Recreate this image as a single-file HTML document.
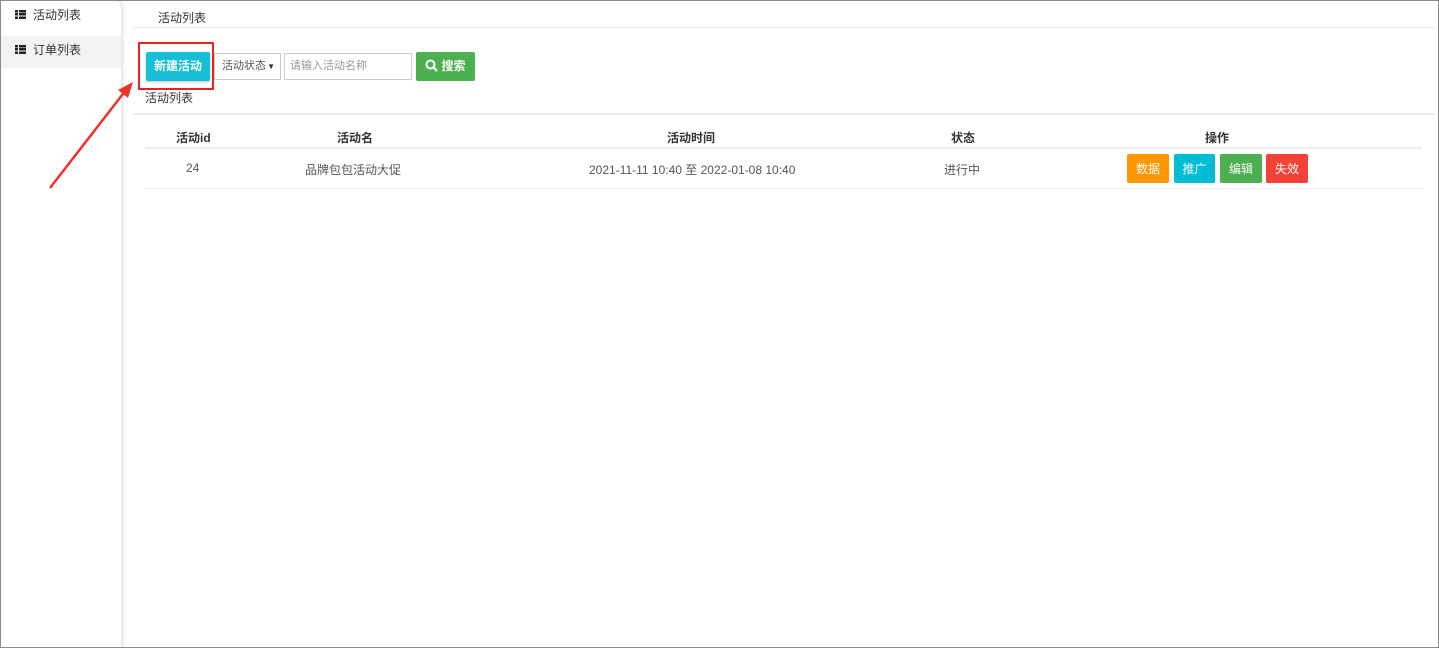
<!DOCTYPE html>
<html><head><meta charset="utf-8"><style>
*{box-sizing:border-box;margin:0;padding:0}
body{width:1439px;height:648px;background:#fff;font-family:"Liberation Sans","Noto Sans CJK SC",sans-serif;font-size:12px;color:#333;position:relative;overflow:hidden}
.frame{position:absolute;left:0;top:0;width:1439px;height:648px;border:1px solid #8a8a8a;pointer-events:none;z-index:5}
.side{position:absolute;left:0;top:0;width:121px;height:648px;background:#fff;box-shadow:2px 0 4px rgba(0,0,0,.12);border-top-right-radius:8px}
.mi{height:32px;line-height:30px;padding-left:15px;font-size:12px;color:#333}
.mi.on{background:#f3f3f3;margin-top:4px;line-height:28px}
.ic{display:inline-block;width:11px;height:9px;margin-right:7px;vertical-align:0px;background:linear-gradient(90deg,#222 0 3px,transparent 3px 4px,#222 4px),linear-gradient(#fff 0,#fff);background-blend-mode:normal;-webkit-mask:linear-gradient(#000 0 2.5px,transparent 2.5px 3.25px,#000 3.25px 5.75px,transparent 5.75px 6.5px,#000 6.5px 9px)}
.t{position:absolute}
.btn{position:absolute;color:#fff;font-size:12px;text-align:center;border-radius:2px}
</style></head><body>
<div class="frame"></div>
<div class="side">
<div class="mi"><span class="ic"></span>活动列表</div>
<div class="mi on"><span class="ic"></span>订单列表</div>
</div>
<div class="t" style="left:158px;top:9px;font-size:12px">活动列表</div>
<div class="t" style="left:133px;top:27px;width:1302px;border-top:1px solid #e6e6e6"></div>
<div class="btn" style="left:146px;top:52px;width:64px;height:29px;line-height:29px;background:#17bfd6;box-shadow:0 1px 2px rgba(0,0,0,.25);font-weight:bold">新建活动</div>
<div class="t" style="left:138px;top:42px;width:76px;height:48px;border:2px solid #e8231e"></div>
<div class="t" style="left:214px;top:53px;width:67px;height:27px;border:1px solid #ccc;line-height:25px;padding-left:7px;font-size:11px;color:#555">活动状态<span style="position:absolute;right:5px;font-size:8px;color:#333">▼</span></div>
<div class="t" style="left:284px;top:53px;width:128px;height:27px;border:1px solid #ccc;line-height:25px;padding-left:5px;font-size:11px;color:#999">请输入活动名称</div>
<div class="btn" style="left:416px;top:52px;width:59px;height:29px;line-height:29px;background:#4caf50;font-weight:bold"><svg width="13" height="13" viewBox="0 0 13 13" style="vertical-align:-2px;margin-right:3px"><circle cx="5.5" cy="5.5" r="4" fill="none" stroke="#fff" stroke-width="2"/><line x1="8.5" y1="8.5" x2="12" y2="12" stroke="#fff" stroke-width="2.2"/></svg>搜索</div>
<div class="t" style="left:145px;top:89px">活动列表</div>
<div class="t" style="left:133px;top:113px;width:1302px;border-top:2px solid #eee"></div>
<div class="t" style="left:145px;top:129px;width:1277px;height:20px;border-bottom:2px solid #eee;font-weight:bold">
<span class="t" style="left:31px">活动id</span><span class="t" style="left:192px">活动名</span><span class="t" style="left:522px">活动时间</span><span class="t" style="left:806px">状态</span><span class="t" style="left:1060px">操作</span></div>
<div class="t" style="left:145px;top:149px;width:1277px;height:40px;border-bottom:1px solid #f0f0f0;color:#555;font-size:12px">
<span class="t" style="left:41px;top:12px">24</span><span class="t" style="left:160px;top:12px">品牌包包活动大促</span><span class="t" style="left:444px;top:12px">2021-11-11 10:40 至 2022-01-08 10:40</span><span class="t" style="left:799px;top:12px">进行中</span></div>
<div class="btn" style="left:1127px;top:154px;width:42px;height:29px;line-height:30px;background:#ff9800">数据</div>
<div class="btn" style="left:1174px;top:154px;width:41px;height:29px;line-height:30px;background:#00bcd4">推广</div>
<div class="btn" style="left:1220px;top:154px;width:42px;height:29px;line-height:30px;background:#4caf50">编辑</div>
<div class="btn" style="left:1266px;top:154px;width:42px;height:29px;line-height:30px;background:#f44336">失效</div>
<svg class="t" style="left:0;top:0" width="200" height="200"><line x1="50" y1="188" x2="126" y2="90" stroke="#f2302a" stroke-width="2.5"/><polygon points="133,82 118,90 128,98" fill="#f2302a"/></svg>
</body></html>
